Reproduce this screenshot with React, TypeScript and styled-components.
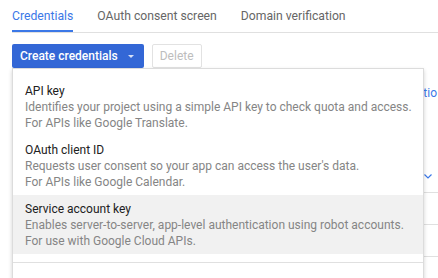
import styled, { createGlobalStyle } from "styled-components";

const GlobalStyle = createGlobalStyle`
    html, body {
        margin: 0;
        height: 278px;
        overflow: hidden;
        background: #fff;
    }
    body {
        font-family: Roboto, "Liberation Sans", Arial, sans-serif;
        font-size: 12px;
        line-height: 16px;
        color: #212121;
    }
`;

const tabs = [
    { label: "Credentials", active: true },
    { label: "OAuth consent screen", active: false },
    { label: "Domain verification", active: false },
];

const options = [
    {
        title: "API key",
        lines: [
            "Identifies your project using a simple API key to check quota and access.",
            "For APIs like Google Translate.",
        ],
    },
    {
        title: "OAuth client ID",
        lines: [
            "Requests user consent so your app can access the user's data.",
            "For APIs like Google Calendar.",
        ],
    },
    {
        title: "Service account key",
        lines: [
            "Enables server-to-server, app-level authentication using robot accounts.",
            "For use with Google Cloud APIs.",
        ],
        hover: true,
    },
];

export default function App() {
    return (
        <Page>
            <GlobalStyle />
            <TabBar>
                {tabs.map((tab) => (
                    <Tab key={tab.label} $active={tab.active}>
                        {tab.label}
                    </Tab>
                ))}
            </TabBar>

            <Toolbar>
                <Dropdown>
                    <PrimaryButton>
                        Create credentials
                        <Caret />
                    </PrimaryButton>
                    <Menu>
                        <MenuList>
                            {options.map((opt) => (
                                <MenuItem key={opt.title} $hover={opt.hover}>
                                    <ItemTitle>{opt.title}</ItemTitle>
                                    {opt.lines.map((line) => (
                                        <ItemText key={line}>{line}</ItemText>
                                    ))}
                                </MenuItem>
                            ))}
                        </MenuList>
                        <MenuFooter />
                    </Menu>
                </Dropdown>
                <GhostButton disabled>Delete</GhostButton>
            </Toolbar>

            <HintRow>
                <DocLink>tio</DocLink>
            </HintRow>

            <Table>
                <HeadRow>
                    <svg width="8" height="5" viewBox="0 0 8 5">
                        <polyline
                            points="0.5,0.5 4,4 7.5,0.5"
                            fill="none"
                            stroke="#3b78e7"
                            strokeWidth="1.2"
                        />
                    </svg>
                </HeadRow>
                <Row />
                <Row />
            </Table>
        </Page>
    );
}

const Page = styled.div`
    padding-left: 12px;
`;

const TabBar = styled.div`
    display: flex;
    gap: 24px;
    height: 32px;
    border-bottom: 1px solid #e0e0e0;
`;

const Tab = styled.div<{ $active?: boolean }>`
    padding-top: 8px;
    box-sizing: border-box;
    height: 32px;
    font-size: 12.2px;
    color: ${({ $active }) => ($active ? "#3b78e7" : "#666")};
    border-bottom: 2px solid
        ${({ $active }) => ($active ? "#3b78e7" : "transparent")};
    white-space: nowrap;
`;

const Toolbar = styled.div`
    display: flex;
    gap: 8px;
    margin-top: 11px;
`;

const Dropdown = styled.div`
    position: relative;
`;

const PrimaryButton = styled.button`
    display: flex;
    align-items: center;
    gap: 10px;
    height: 24px;
    padding: 0 10px 0 8px;
    border: none;
    border-radius: 2px;
    background: #3367d6;
    color: #fff;
    font: 500 12px/16px Roboto, "Liberation Sans", Arial, sans-serif;
    white-space: nowrap;
`;

const Caret = styled.span`
    width: 0;
    height: 0;
    margin-top: 1px;
    border-left: 3px solid transparent;
    border-right: 3px solid transparent;
    border-top: 3px solid rgba(255, 255, 255, 0.8);
`;

const GhostButton = styled.button`
    height: 24px;
    padding: 0 7px;
    border: 1px solid #e2e2e2;
    border-radius: 2px;
    background: #fff;
    color: #bdbdbd;
    font: 400 12px/16px Roboto, "Liberation Sans", Arial, sans-serif;
`;

const Menu = styled.div`
    position: absolute;
    top: 100%;
    left: 0;
    z-index: 10;
    width: 412px;
    box-sizing: border-box;
    background: #fff;
    border: 1px solid #dcdcdc;
    box-shadow: 0 2px 4px rgba(0, 0, 0, 0.18);
`;

const MenuList = styled.div`
    padding: 8px 0;
`;

const MenuItem = styled.div<{ $hover?: boolean }>`
    padding: 6px 12px 5px;
    background: ${({ $hover }) => ($hover ? "#f1f1f1" : "transparent")};
`;

const ItemTitle = styled.div`
    color: #212121;
`;

const ItemText = styled.div`
    color: #858585;
    white-space: nowrap;
`;

const MenuFooter = styled.div`
    height: 40px;
    border-top: 1px solid #e0e0e0;
`;

const HintRow = styled.div`
    display: flex;
    justify-content: flex-end;
    margin-top: 17px;
`;

const DocLink = styled.span`
    color: #3b78e7;
    white-space: nowrap;
    padding-right: 1px;
`;

const Table = styled.div`
    margin-top: 60px;
`;

const HeadRow = styled.div`
    display: flex;
    justify-content: flex-end;
    align-items: center;
    height: 32px;
    padding-right: 6px;
    box-sizing: border-box;
    border-bottom: 1px solid #e0e0e0;
`;

const Row = styled.div`
    height: 32px;
    box-sizing: border-box;
    border-bottom: 1px solid #e0e0e0;
`;
